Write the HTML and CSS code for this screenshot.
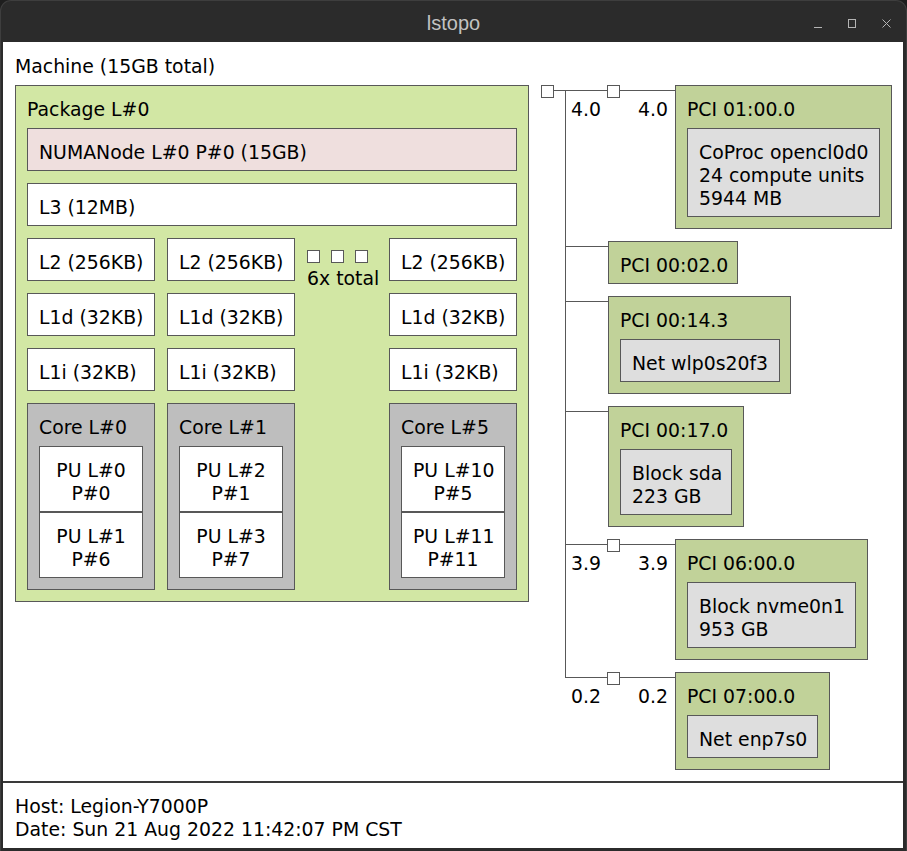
FILE: index.html
```html
<!DOCTYPE html>
<html>
<head>
<meta charset="utf-8">
<title>lstopo</title>
<link rel="stylesheet" href="styles.css">
</head>
<body>
<div class="window">
  <div class="titlebar">
    <div class="tb-side"></div>
    <div class="title">lstopo</div>
    <div class="tb-side tb-controls">
      <svg class="controls" width="80" height="20" viewBox="0 0 80 20">
        <line x1="2" y1="15.5" x2="10" y2="15.5"/>
        <rect x="36.5" y="7.5" width="7" height="8"/>
        <line x1="70.5" y1="7.5" x2="78.5" y2="15.5"/>
        <line x1="78.5" y1="7.5" x2="70.5" y2="15.5"/>
      </svg>
    </div>
  </div>
  <div class="client">
    <div class="machine">
      <div class="label">Machine (15GB total)</div>
      <div class="machine-body">
        <div class="obj package">
          <div class="label">Package L#0</div>
          <div class="leaf numa">NUMANode L#0 P#0 (15GB)</div>
          <div class="leaf cache l3">L3 (12MB)</div>
          <div class="cols">
            <div class="col">
              <div class="leaf cache">L2 (256KB)</div>
              <div class="leaf cache">L1d (32KB)</div>
              <div class="leaf cache">L1i (32KB)</div>
              <div class="obj core">
                <div class="label">Core L#0</div>
                <div class="leaf pu">PU L#0<br>P#0</div>
                <div class="leaf pu">PU L#1<br>P#6</div>
              </div>
            </div>
            <div class="col">
              <div class="leaf cache">L2 (256KB)</div>
              <div class="leaf cache">L1d (32KB)</div>
              <div class="leaf cache">L1i (32KB)</div>
              <div class="obj core">
                <div class="label">Core L#1</div>
                <div class="leaf pu">PU L#2<br>P#1</div>
                <div class="leaf pu">PU L#3<br>P#7</div>
              </div>
            </div>
            <div class="dots">
              <div class="squares"><span class="sq"></span><span class="sq"></span><span class="sq"></span></div>
              <div class="dots-text">6x total</div>
            </div>
            <div class="col">
              <div class="leaf cache">L2 (256KB)</div>
              <div class="leaf cache">L1d (32KB)</div>
              <div class="leaf cache">L1i (32KB)</div>
              <div class="obj core">
                <div class="label">Core L#5</div>
                <div class="leaf pu">PU L#10<br>P#5</div>
                <div class="leaf pu">PU L#11<br>P#11</div>
              </div>
            </div>
          </div>
        </div>

        <div class="io">
          <div class="io-row">
            <div class="bus bus-first host"><span class="sq host-sq"></span>4.0</div>
            <div class="bridge"><span class="sq"></span>4.0</div>
            <div class="obj pci w217">
              <div class="label">PCI 01:00.0</div>
              <div class="leaf osdev w193">CoProc opencl0d0<br>24 compute units<br>5944 MB</div>
            </div>
          </div>
          <div class="io-row">
            <div class="bus"></div>
            <div class="leaf pci w130">PCI 00:02.0</div>
          </div>
          <div class="io-row">
            <div class="bus"></div>
            <div class="obj pci w183">
              <div class="label">PCI 00:14.3</div>
              <div class="leaf osdev w160">Net wlp0s20f3</div>
            </div>
          </div>
          <div class="io-row">
            <div class="bus"></div>
            <div class="obj pci w136">
              <div class="label">PCI 00:17.0</div>
              <div class="leaf osdev w112">Block sda<br>223 GB</div>
            </div>
          </div>
          <div class="io-row">
            <div class="bus">3.9</div>
            <div class="bridge"><span class="sq"></span>3.9</div>
            <div class="obj pci w193">
              <div class="label">PCI 06:00.0</div>
              <div class="leaf osdev w169">Block nvme0n1<br>953 GB</div>
            </div>
          </div>
          <div class="io-row">
            <div class="bus bus-last">0.2</div>
            <div class="bridge"><span class="sq"></span>0.2</div>
            <div class="obj pci w155">
              <div class="label">PCI 07:00.0</div>
              <div class="leaf osdev w131">Net enp7s0</div>
            </div>
          </div>
        </div>
      </div>
    </div>
    <div class="legend">
      <div>Host: Legion-Y7000P</div>
      <div>Date: Sun 21 Aug 2022 11:42:07 PM CST</div>
    </div>
  </div>
</div>
</body>
</html>
```

FILE: styles.css
```css
* {
  box-sizing: border-box;
}

html,
body {
  margin: 0;
  padding: 0;
  background: #1e1e1e;
}

body {
  width: 907px;
  height: 851px;
  overflow: hidden;
}

.window {
  width: 907px;
  height: 851px;
  background: #2b2b2b;
  border: 1px solid #3e3e3e;
  border-bottom: none;
  border-radius: 11px 11px 0 0;
  display: flex;
  flex-direction: column;
  overflow: hidden;
}

/* ---------- title bar ---------- */
.titlebar {
  height: 41px;
  flex: none;
  display: grid;
  grid-template-columns: 1fr auto 1fr;
  align-items: center;
}

.title {
  font-family: "Liberation Sans", "DejaVu Sans", sans-serif;
  font-size: 20px;
  color: #c2c2c2;
  line-height: 24px;
  padding-top: 2px;
}

.tb-controls {
  display: flex;
  justify-content: flex-end;
  padding-right: 14px;
}

.controls {
  display: block;
  fill: none;
  stroke: #b4b4b4;
  stroke-width: 1;
}

/* ---------- client area ---------- */
.client {
  width: 900px;
  height: 806px;
  margin: 0 3px 0 2px;
  background: #ffffff;
  overflow: hidden;
  font-family: "DejaVu Sans", "Noto Sans", sans-serif;
  font-size: 18.85px;
  line-height: 23px;
  color: #000000;
  display: flex;
  flex-direction: column;
}

.label {
  line-height: 23px;
  white-space: nowrap;
}

.obj {
  border: 1px solid #585858;
  padding: 12px 11px 11px;
}

.obj > .label {
  margin-bottom: 7px;
}

.leaf {
  border: 1px solid #585858;
  padding: 12px 11px 6px;
  white-space: nowrap;
}

.machine {
  padding: 13px 12px 11px;
  border-bottom: 1px solid #3a3a3a;
  flex: none;
}

.machine > .label {
  margin-bottom: 7px;
}

.machine-body {
  display: flex;
  align-items: flex-start;
  gap: 12px;
}

/* ---------- package ---------- */
.package {
  width: 514px;
  flex: none;
  background: #d2e7a4;
}

.numa {
  background: #efdfde;
  margin-bottom: 12px;
}

.cache {
  background: #ffffff;
}

.l3 {
  margin-bottom: 12px;
}

.cols {
  display: flex;
  gap: 12px;
  align-items: flex-start;
}

.col {
  width: 128px;
  display: flex;
  flex-direction: column;
  gap: 12px;
}

.core {
  background: #bebebe;
}

.pu {
  background: #ffffff;
  text-align: center;
  height: 66px;
}

.dots {
  width: 70px;
  padding-top: 12px;
}

.squares {
  display: flex;
  gap: 11px;
}

.sq {
  display: block;
  width: 13px;
  height: 13px;
  border: 1px solid #585858;
  background: #ffffff;
  flex: none;
}

.dots-text {
  margin-top: 4px;
  white-space: nowrap;
}

/* ---------- I/O tree ---------- */
.io {
  display: flex;
  flex-direction: column;
  gap: 12px;
}

.io-row {
  display: flex;
  align-items: flex-start;
}

.bus,
.bridge {
  width: 67px;
  flex: none;
  align-self: stretch;
  position: relative;
  padding: 13px 0 0 30px;
  white-space: nowrap;
}

/* horizontal branch */
.bus::before,
.bridge::before {
  content: "";
  position: absolute;
  top: 5px;
  left: 24px;
  right: 0;
  height: 1px;
  background: #585858;
}

/* vertical bus line */
.bus::after {
  content: "";
  position: absolute;
  left: 24px;
  top: 0;
  bottom: -12px;
  width: 1px;
  background: #585858;
}

.bus.host::before {
  left: 12px;
}

.bus-first::after {
  top: 5px;
}

.bus-last::after {
  bottom: auto;
  top: -12px;
  height: 18px;
}

.bridge::before {
  left: 12px;
}

.host-sq,
.bridge .sq {
  position: absolute;
  left: 0;
  top: 0;
  z-index: 1;
}

.bridge .sq {
  left: -1px;
}

.pci {
  background: #c1d299;
  flex: none;
}

.osdev {
  background: #dedede;
}

.w217 { width: 217px; }
.w193 { width: 193px; }
.w183 { width: 183px; }
.w169 { width: 169px; }
.w160 { width: 160px; }
.w155 { width: 155px; }
.w136 { width: 136px; }
.w131 { width: 131px; }
.w130 { width: 130px; }
.w112 { width: 112px; }

/* ---------- legend ---------- */
.legend {
  flex: 1;
  border-top: 1px solid #3a3a3a;
  padding: 12px 12px 0;
  white-space: nowrap;
}
```
